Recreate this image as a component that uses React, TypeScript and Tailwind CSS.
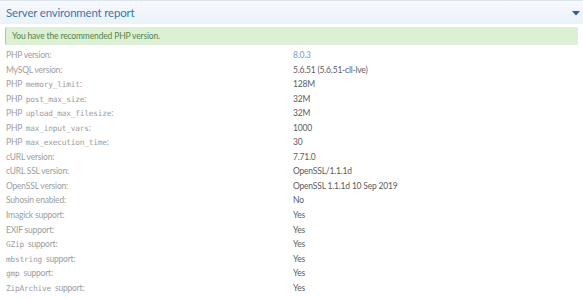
import React from "react";

type Row = { label: React.ReactNode; value: string; link?: boolean };

const mono = "font-['DejaVu_Sans_Mono',monospace] text-[7.8px] tracking-[-0.2px] leading-none";

const rows: Row[] = [
  { label: "PHP version:", value: "8.0.3", link: true },
  { label: "MySQL version:", value: "5.6.51 (5.6.51-cll-lve)" },
  { label: <>PHP <span className={mono + " ml-[2px]"}>memory_limit</span>:</>, value: "128M" },
  { label: <>PHP <span className={mono + " ml-[2px]"}>post_max_size</span>:</>, value: "32M" },
  { label: <>PHP <span className={mono + " ml-[2px]"}>upload_max_filesize</span>:</>, value: "32M" },
  { label: <>PHP <span className={mono + " ml-[2px]"}>max_input_vars</span>:</>, value: "1000" },
  { label: <>PHP <span className={mono + " ml-[2px]"}>max_execution_time</span>:</>, value: "30" },
  { label: "cURL version:", value: "7.71.0" },
  { label: "cURL SSL version:", value: "OpenSSL/1.1.1d" },
  { label: "OpenSSL version:", value: "OpenSSL 1.1.1d 10 Sep 2019" },
  { label: "Suhosin enabled:", value: "No" },
  { label: "Imagick support:", value: "Yes" },
  { label: "EXIF support:", value: "Yes" },
  { label: <><span className={mono + " mr-[2px]"}>GZip</span> support:</>, value: "Yes" },
  { label: <><span className={mono + " mr-[2px]"}>mbstring</span> support:</>, value: "Yes" },
  { label: <><span className={mono + " mr-[2px]"}>gmp</span> support:</>, value: "Yes" },
  { label: <><span className={mono + " mr-[2px]"}>ZipArchive</span> support:</>, value: "Yes" },
];

export default function App() {
  return (
    <div className="w-[583px] h-[300px] overflow-hidden bg-white font-['Lato',sans-serif]">
      {/* Header */}
      <div className="h-[24px] border-t border-[#dde3ea] bg-gradient-to-b from-[#f6f9fd] to-[#eaf2fb] flex items-center justify-between pl-[6px] pr-[3px]">
        <h2 className="text-[11.5px] tracking-[-0.2px] text-[#3b76b0] leading-none">Server environment report</h2>
        <svg width="8" height="5" viewBox="0 0 8 5" className="mt-[1px]">
          <path d="M0 0h8L4 4.5z" fill="#245e99" />
        </svg>
      </div>

      <div className="px-[5px] pt-[3px]">
        {/* Notice */}
        <div className="h-[18px] rounded-[2px] bg-[#dcf0d6] border-l-[1.5px] border-[#9fcf94] flex items-center pl-[6px] text-[8.5px] tracking-[-0.15px] text-[#55844b]">
          You have the recommended PHP version.
        </div>

        {/* Report */}
        <div className="mt-[3px] grid grid-cols-[287px_1fr] auto-rows-[14.56px] text-[8.5px] tracking-[-0.2px] pl-[1px]">
          {rows.map((r, i) => (
            <React.Fragment key={i}>
              <div className="flex items-center text-[#9d9d9d]">
                <span className="leading-none">{r.label}</span>
              </div>
              <div className={"flex items-center " + (r.link ? "text-[#6d9fd2]" : "text-[#5c5c5c]")}>
                <span className="leading-none">{r.value}</span>
              </div>
            </React.Fragment>
          ))}
        </div>
      </div>
    </div>
  );
}
